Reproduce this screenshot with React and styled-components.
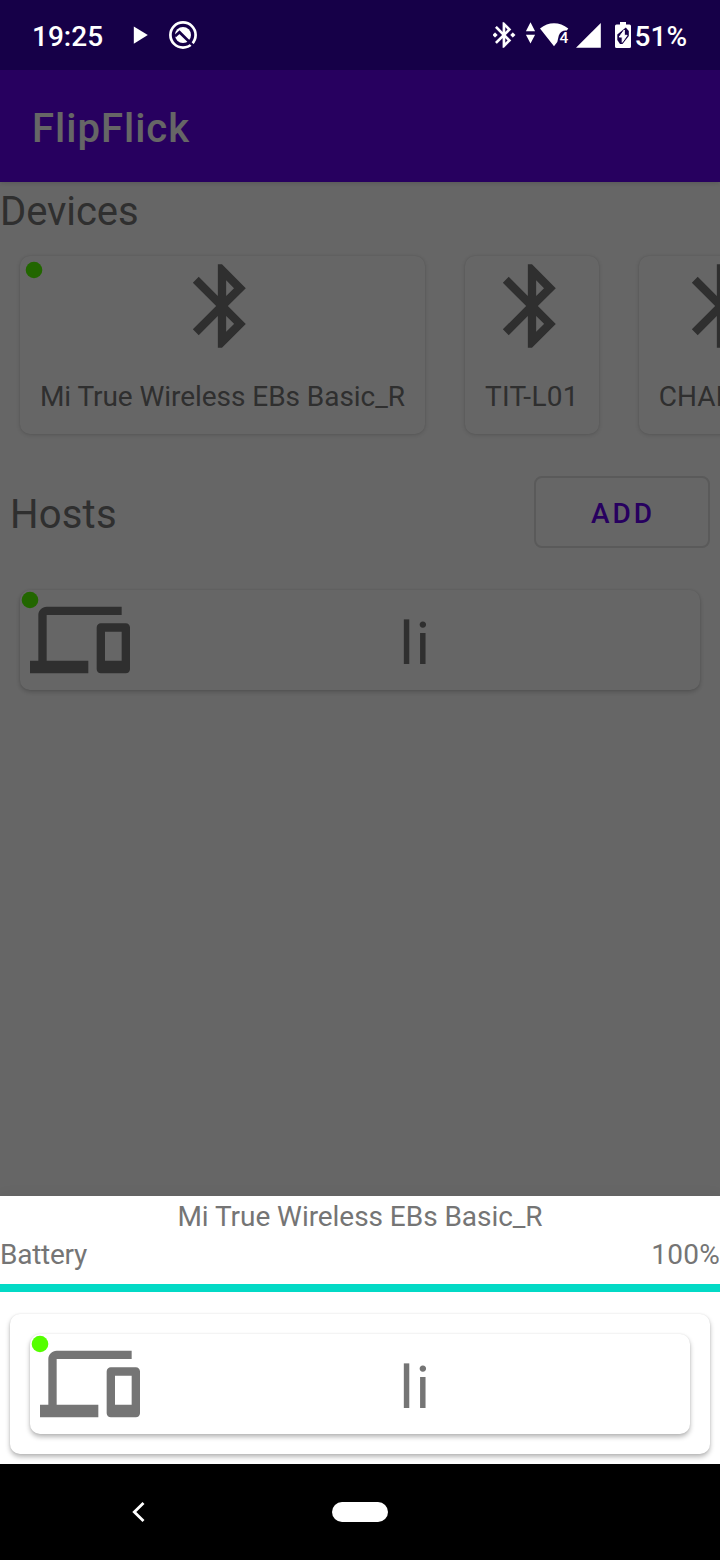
import React from "react";
import styled, { createGlobalStyle } from "styled-components";

const GlobalStyle = createGlobalStyle`
  *, *::before, *::after { box-sizing: border-box; }
  body { margin: 0; background: #000; font-family: Roboto, "Liberation Sans", sans-serif; }
  svg { display: block; }
`;

const Screen = styled.div`
  position: relative;
  display: flex;
  flex-direction: column;
  width: 720px;
  height: 1560px;
  overflow: hidden;
  background: #fff;
  color: #757575;
`;

const StatusBar = styled.header`
  display: flex;
  flex: none;
  align-items: center;
  position: relative;
  z-index: 2;
  height: 70px;
  padding: 3px 33px 0 32px;
  background: #160048;
  color: #fff;
  font-size: 28px;
  font-weight: 500;
  line-height: 33px;
`;

const StatusIcons = styled.svg`
  flex: none;
  width: ${(p) => p.$width}px;
  height: 30px;
  margin: -3px 0 0 ${(p) => p.$left || 0}px;
`;

const StatusRight = styled.div`
  display: flex;
  align-items: center;
  margin-left: auto;
`;

const AppBar = styled.div`
  display: flex;
  flex: none;
  align-items: center;
  position: relative;
  height: 112px;
  padding: 5px 32px 0;
  background: #6200ee;
  color: #fff;
  box-shadow: 0 1px 5px rgba(0, 0, 0, 0.16);
`;

const AppTitle = styled.h1`
  margin: 0;
  font-size: 40px;
  font-weight: 500;
  letter-spacing: 1px;
  line-height: 47px;
`;

const Content = styled.main`
  display: flex;
  flex: 1;
  flex-direction: column;
  padding-top: 6px;
`;

const Heading = styled.h2`
  margin: 0;
  font-size: 40px;
  font-weight: 400;
  letter-spacing: ${(p) => p.$tracking || 0}px;
  line-height: 47px;
`;

const Card = styled.div`
  position: relative;
  flex: none;
  border-radius: 10px;
  background: #fff;
  box-shadow: 0 ${(p) => p.$drop || 2}px 5px rgba(0, 0, 0, ${(p) => p.$shade || 0.15}),
    0 0 2px rgba(0, 0, 0, 0.1);
`;

const DeviceList = styled.div`
  display: flex;
  gap: 39.7px;
  padding: 21px 20px 0;
`;

const DeviceCard = styled(Card)`
  display: flex;
  flex-direction: column;
  align-items: center;
  gap: 24px;
  width: ${(p) => p.$width}px;
  height: 178px;
`;

const BodyText = styled.span`
  font-size: 28px;
  letter-spacing: ${(p) => p.$tracking || 0}px;
  line-height: 33px;
  white-space: nowrap;
`;

const HostsBar = styled.div`
  display: flex;
  align-items: center;
  justify-content: space-between;
  margin-top: 42px;
  padding: 0 10px;

  ${Heading} { padding-top: 5px; }
`;

const OutlinedButton = styled.button`
  width: 176px;
  height: 72px;
  padding: 2px 0 0 2px;
  border: 2px solid #e0e0e0;
  border-radius: 8px;
  background: transparent;
  color: #6200ee;
  font: 500 28px/33px Roboto, "Liberation Sans", sans-serif;
  letter-spacing: 3px;
`;

const HostCard = styled(Card)`
  display: flex;
  align-items: center;
  height: 100px;
  margin: ${(p) => p.$margin};
  padding: 0 0 0 10px;
`;

const HostName = styled.span`
  flex: 1;
  padding: 7px 0 0 1px;
  font-size: 60px;
  letter-spacing: 1.6px;
  line-height: 70px;
  text-align: center;
`;

const Dot = styled.svg`
  position: absolute;
  top: ${(p) => p.$inset}px;
  left: ${(p) => p.$inset}px;
  width: 18px;
  height: 18px;
  fill: #55ff00;
`;

const Scrim = styled.div`
  position: absolute;
  inset: 70px 0 0;
  z-index: 1;
  background: rgba(0, 0, 0, 0.6);
`;

const Sheet = styled.section`
  display: flex;
  flex: none;
  flex-direction: column;
  position: relative;
  z-index: 2;
  height: 268px;
  padding-top: 4px;
  background: #fff;
  box-shadow: 0 0 14px rgba(0, 0, 0, 0.06);
`;

const SheetTitle = styled(BodyText)`
  text-align: center;
`;

const BatteryRow = styled.div`
  display: flex;
  justify-content: space-between;
  margin-top: 5px;
`;

const BatteryTrack = styled.div`
  height: 8px;
  margin-top: 13px;
  background: #b3f4ee;
`;

const BatteryLevel = styled.div`
  height: 100%;
  background: #03dac6;
`;

const HostGroup = styled(Card)`
  margin: 22px 10px 10px;
  padding: 20px;
`;

const NavBar = styled.nav`
  display: grid;
  grid-template-columns: 1fr 56px 1fr;
  flex: none;
  align-items: center;
  position: relative;
  z-index: 3;
  height: 96px;
  background: #000;
`;

const BackIcon = styled.svg`
  width: 14px;
  height: 22px;
  margin-left: 132px;
`;

const HomePill = styled.div`
  height: 20px;
  border-radius: 10px;
  background: #fff;
`;

function BluetoothIcon() {
  return (
    <svg width="100" height="100" viewBox="0 0 24 24" fill="currentColor">
      <path d="M17.71 7.71L12 2h-1v7.59L6.41 5 5 6.41 10.59 12 5 17.59 6.41 19 11 14.41V22h1l5.71-5.71-4.3-4.29 4.3-4.29zM13 5.83l1.88 1.88L13 9.59V5.83zm1.88 10.46L13 18.17v-3.76l1.88 1.88z" />
    </svg>
  );
}

function DevicesIcon() {
  return (
    <svg width="100" height="100" viewBox="0 0 24 24" fill="currentColor">
      <path d="M4 6h18V4H4c-1.1 0-2 .9-2 2v11H0v3h14v-3H4V6zm19 2h-6c-.55 0-1 .45-1 1v10c0 .55.45 1 1 1h6c.55 0 1-.45 1-1V9c0-.55-.45-1-1-1zm-1 9h-4v-7h4v7z" />
    </svg>
  );
}

function OnlineDot({ inset }) {
  return (
    <Dot $inset={inset} viewBox="0 0 18 18">
      <circle cx="9" cy="9" r="8.3" />
    </Dot>
  );
}

function Host({ name, margin, drop, shade }) {
  return (
    <HostCard $margin={margin} $drop={drop} $shade={shade}>
      <DevicesIcon />
      <HostName>{name}</HostName>
      <OnlineDot inset={1} />
    </HostCard>
  );
}

const devices = [
  { name: "Mi True Wireless EBs Basic_R", width: 404.9, tracking: -0.05, online: true },
  { name: "TIT-L01", width: 134.7, tracking: 0.3 },
  { name: "CHARGE4", width: 164.8, tracking: 0.05 },
];

const battery = 100;

export default function App() {
  return (
    <Screen>
      <GlobalStyle />
      <StatusBar>
        <span>19:25</span>
        <StatusIcons $width={66} $left={29} viewBox="132 20 66 30">
          <path d="M133.8 26.5v17.3l14-8.7z" fill="#fff" />
          <circle cx="183" cy="35" r="12.6" fill="none" stroke="#fff" strokeWidth="2.7" />
          <circle cx="183" cy="35" r="8" fill="#fff" />
          <path d="M175 36.2l4.5-4 14.7 14.4" fill="none" stroke="#160048" strokeWidth="2.7" />
        </StatusIcons>
        <StatusRight>
          <StatusIcons $width={142} viewBox="493 20 142 30" fill="#fff">
            <g transform="translate(488.7 19.7) scale(1.27)" stroke="#fff" strokeWidth=".1">
              <path d="M7 12l-2-2-2 2 2 2 2-2zm10.71-4.29L12 2h-1v7.59L6.41 5 5 6.41 10.59 12 5 17.59 6.41 19 11 14.41V22h1l5.71-5.71-4.3-4.29 4.3-4.29zM13 5.83l1.88 1.88L13 9.59V5.83zm1.88 10.46L13 18.17v-3.76l1.88 1.88zM19 10l-2 2 2 2 2-2-2-2z" />
            </g>
            <path d="M530.5 22.3l4.6 8.9h-9.2zM530.5 43.5l4.6-8.8h-9.2z" />
            <path d="M554 46.3L540 28.6Q546.5 23.3 554 23.3T568.3 28.6L566.8 30.5Q561 30 558.8 35.5L557.3 42z" />
            <text x="559.4" y="43.3" fontSize="15.5" fontWeight="500">4</text>
            <path d="M576 47.8L600.8 23v24.8z" />
            <path d="M620 22h6v2.5h3.5q1.5 0 1.5 1.5v20.5q0 1.5-1.5 1.5h-13q-1.500 0-1.500-1.500V26q0-1.500 1.500-1.500h3.500z" />
            <path d="M625.800 27.500L617.300 34.500V40L620 44h2.500L628.800 36V31z" fill="#160048" />
            <path d="M624.300 30L619.200 37h3v5.300L627.100 35.300h-2.800z" stroke="#fff" strokeWidth="1" />
          </StatusIcons>
          <span>51%</span>
        </StatusRight>
      </StatusBar>
      <AppBar>
        <AppTitle>FlipFlick</AppTitle>
      </AppBar>
      <Content>
        <Heading $tracking={-0.08}>Devices</Heading>
        <DeviceList>
          {devices.map((device) => (
            <DeviceCard key={device.name} $width={device.width} $drop={1} $shade={0.15}>
              <BluetoothIcon />
              <BodyText $tracking={device.tracking}>{device.name}</BodyText>
              {device.online && <OnlineDot inset={5} />}
            </DeviceCard>
          ))}
        </DeviceList>
        <HostsBar>
          <Heading $tracking={0.2}>Hosts</Heading>
          <OutlinedButton type="button">ADD</OutlinedButton>
        </HostsBar>
        <Host name="li" margin="42px 20px 0" drop={2} shade={0.2} />
      </Content>
      <Scrim />
      <Sheet>
        <SheetTitle $tracking={-0.05}>Mi True Wireless EBs Basic_R</SheetTitle>
        <BatteryRow>
          <BodyText $tracking={-0.25}>Battery</BodyText>
          <BodyText $tracking={0.25}>{battery}%</BodyText>
        </BatteryRow>
        <BatteryTrack>
          <BatteryLevel style={{ width: `${battery}%` }} />
        </BatteryTrack>
        <HostGroup $drop={3} $shade={0.28}>
          <Host name="li" margin="0" drop={3} shade={0.28} />
        </HostGroup>
      </Sheet>
      <NavBar>
        <BackIcon viewBox="0 0 14 22" fill="none" stroke="#fff" strokeWidth="2.8">
          <path d="M11.5 2L2.3 11l9.2 9" />
        </BackIcon>
        <HomePill />
      </NavBar>
    </Screen>
  );
}
